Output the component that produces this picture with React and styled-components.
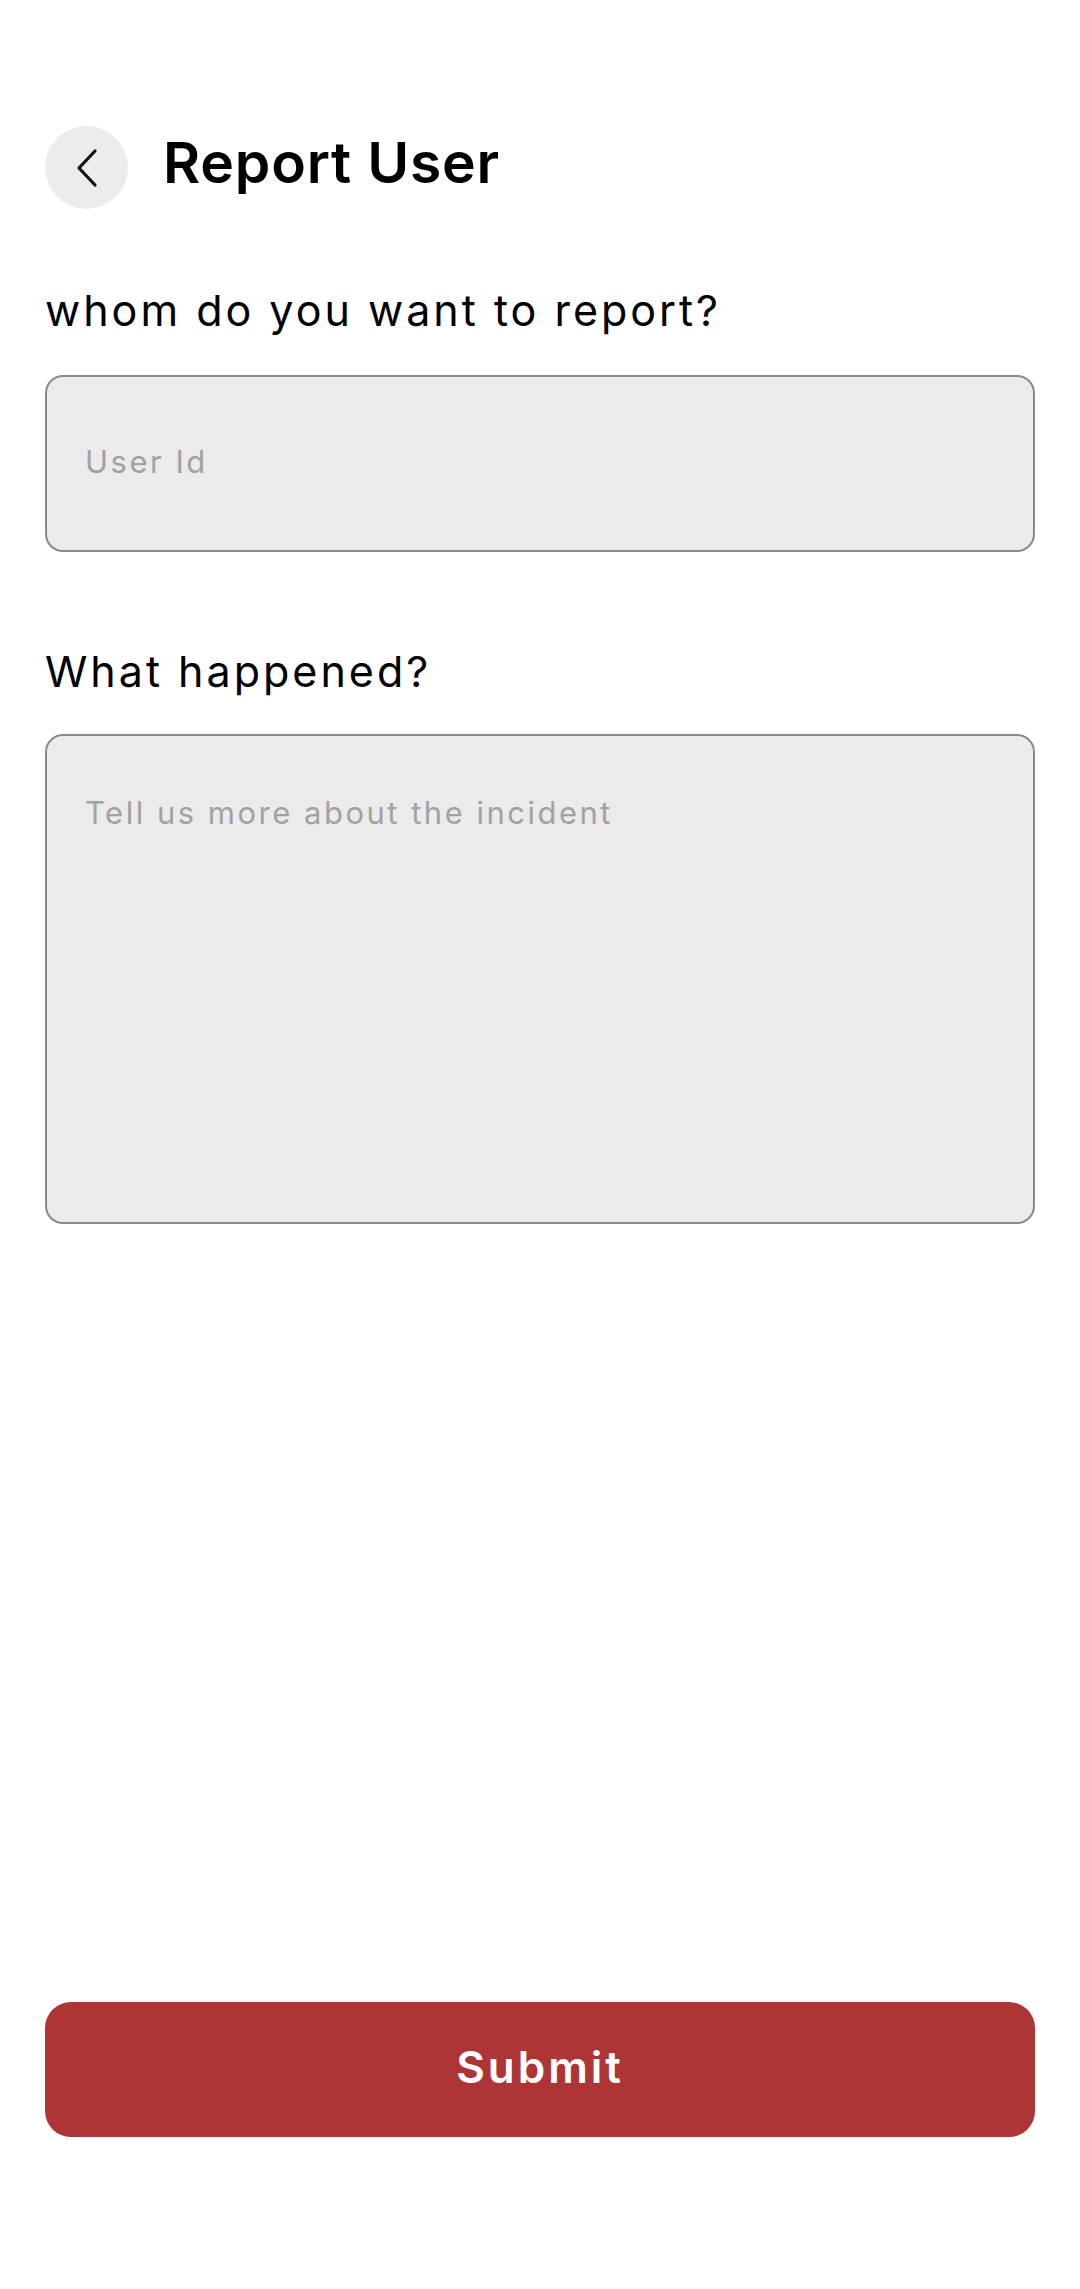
import styled, { createGlobalStyle } from "styled-components";

const GlobalStyle = createGlobalStyle`
  html, body {
    margin: 0;
    padding: 0;
    background: #ffffff;
  }
  * {
    box-sizing: border-box;
  }
`;

const Page = styled.div`
  min-height: 2289px;
  display: flex;
  flex-direction: column;
  padding: 126px 45px 152px;
  font-family: Inter, "Open Sans", sans-serif;
  color: #000;
`;

const Header = styled.header`
  display: flex;
  align-items: center;
  gap: 35px;
  height: 83px;
`;

const BackButton = styled.button`
  width: 83px;
  height: 83px;
  border-radius: 50%;
  border: none;
  background: #ececec;
  display: flex;
  align-items: center;
  justify-content: center;
  padding: 0;
  cursor: pointer;
`;

const Title = styled.h1`
  margin: 0 0 10px;
  font-size: 57px;
  font-weight: 600;
  letter-spacing: 0.8px;
  line-height: 1;
`;

const Label = styled.label`
  display: block;
  font-size: 43px;
  font-weight: 400;
  letter-spacing: 3px;
  line-height: 60px;
  margin-top: ${(p) => p.$top}px;
  margin-bottom: ${(p) => p.$bottom}px;
`;

const fieldBase = `
  width: 100%;
  background: #ebebeb;
  border: 2px solid #8a8a8a;
  border-radius: 18px;
  font-family: Inter, "Open Sans", sans-serif;
  font-size: 31px;
  letter-spacing: 2.5px;
  color: #333;
  outline: none;
  padding: 0 38px;

  &::placeholder {
    color: #a2a2a2;
  }
`;

const TextInput = styled.input`
  ${fieldBase}
  height: 177px;
  padding-bottom: 4px;
`;

const TextArea = styled.textarea`
  ${fieldBase}
  height: 490px;
  resize: none;
  padding-top: 56px;
  line-height: 42px;
`;

const Spacer = styled.div`
  flex: 1;
`;

const SubmitButton = styled.button`
  width: 100%;
  height: 135px;
  border: none;
  border-radius: 26px;
  background: #ae3535;
  color: #fff;
  font-family: Inter, "Open Sans", sans-serif;
  font-size: 44px;
  font-weight: 600;
  letter-spacing: 3px;
  padding-bottom: 6px;
  cursor: pointer;
`;

const Chevron = () => (
  <svg width="22" height="40" viewBox="0 0 22 40" fill="none">
    <path d="M19 3 L3 20 L19 37" stroke="#111" strokeWidth="3.2" strokeLinecap="round" strokeLinejoin="round" />
  </svg>
);

export default function App() {
  return (
    <>
      <GlobalStyle />
      <Page>
        <Header>
          <BackButton aria-label="Back">
            <Chevron />
          </BackButton>
          <Title>Report User</Title>
        </Header>

        <Label $top={71} $bottom={35} htmlFor="user-id">
          whom do you want to report?
        </Label>
        <TextInput id="user-id" placeholder="User Id" />

        <Label $top={89} $bottom={33} htmlFor="details">
          What happened?
        </Label>
        <TextArea id="details" placeholder="Tell us more about the incident" />

        <Spacer />
        <SubmitButton>Submit</SubmitButton>
      </Page>
    </>
  );
}
